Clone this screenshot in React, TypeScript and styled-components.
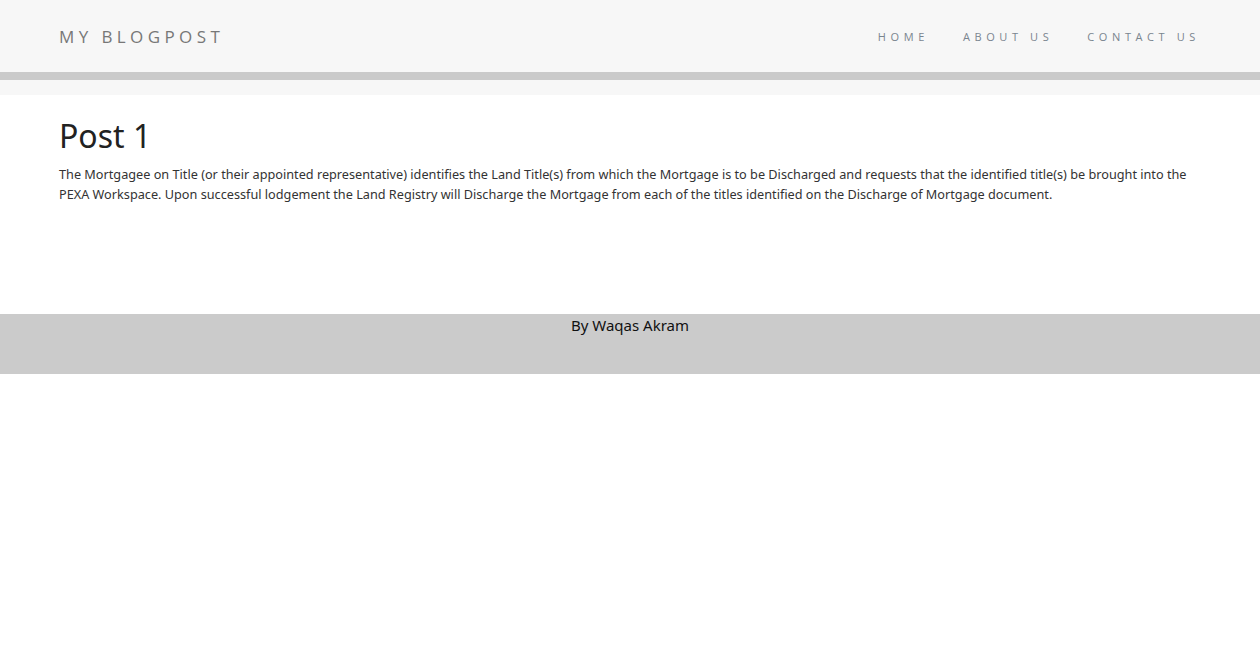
import React from "react";
import styled, { createGlobalStyle } from "styled-components";

const Global = createGlobalStyle`
  html, body { margin: 0; padding: 0; background: #fff; }
  body { font-family: "Noto Sans", "Open Sans", sans-serif; }
`;

const Header = styled.header`
  background: #f7f7f7;
  height: 72px;
  display: flex;
  align-items: center;
  justify-content: space-between;
  padding: 0 60px 0 59px;
  box-sizing: border-box;
`;

const Logo = styled.div`
  font-family: "Open Sans", sans-serif;
  font-size: 17px;
  letter-spacing: 4.4px;
  color: #777;
`;

const Nav = styled.nav`
  display: flex;
  gap: 34px;
`;

const NavLink = styled.a`
  font-family: "Open Sans", sans-serif;
  font-size: 11px;
  letter-spacing: 4.6px;
  color: #7a858f;
  text-decoration: none;
`;

const Rule = styled.div`
  height: 8px;
  background: #cacaca;
`;

const Strip = styled.div`
  height: 15px;
  background: #f7f7f7;
`;

const Main = styled.main`
  padding: 20px 59px 0;
  height: 219px;
  box-sizing: border-box;
`;

const Title = styled.h1`
  margin: 0 0 7px;
  font-family: "Noto Sans", sans-serif;
  font-weight: 400;
  font-size: 32px;
  line-height: 42px;
  color: #222;
`;

const Text = styled.p`
  margin: 0;
  font-size: 12.7px;
  line-height: 20px;
  color: #333;
`;

const Footer = styled.footer`
  background: #cbcbcb;
  height: 60px;
  text-align: center;
  font-size: 15px;
  line-height: 23px;
  color: #111;
`;

export default function App() {
  return (
    <>
      <Global />
      <Header>
        <Logo>MY BLOGPOST</Logo>
        <Nav>
          <NavLink href="#">HOME</NavLink>
          <NavLink href="#">ABOUT US</NavLink>
          <NavLink href="#">CONTACT US</NavLink>
        </Nav>
      </Header>
      <Rule />
      <Strip />
      <Main>
        <Title>Post 1</Title>
        <Text>
          The Mortgagee on Title (or their appointed representative) identifies the Land Title(s) from which the Mortgage is to be Discharged and requests that the identified title(s) be brought into the PEXA Workspace. Upon successful lodgement the Land Registry will Discharge the Mortgage from each of the titles identified on the Discharge of Mortgage document.
        </Text>
      </Main>
      <Footer>By Waqas Akram</Footer>
    </>
  );
}
